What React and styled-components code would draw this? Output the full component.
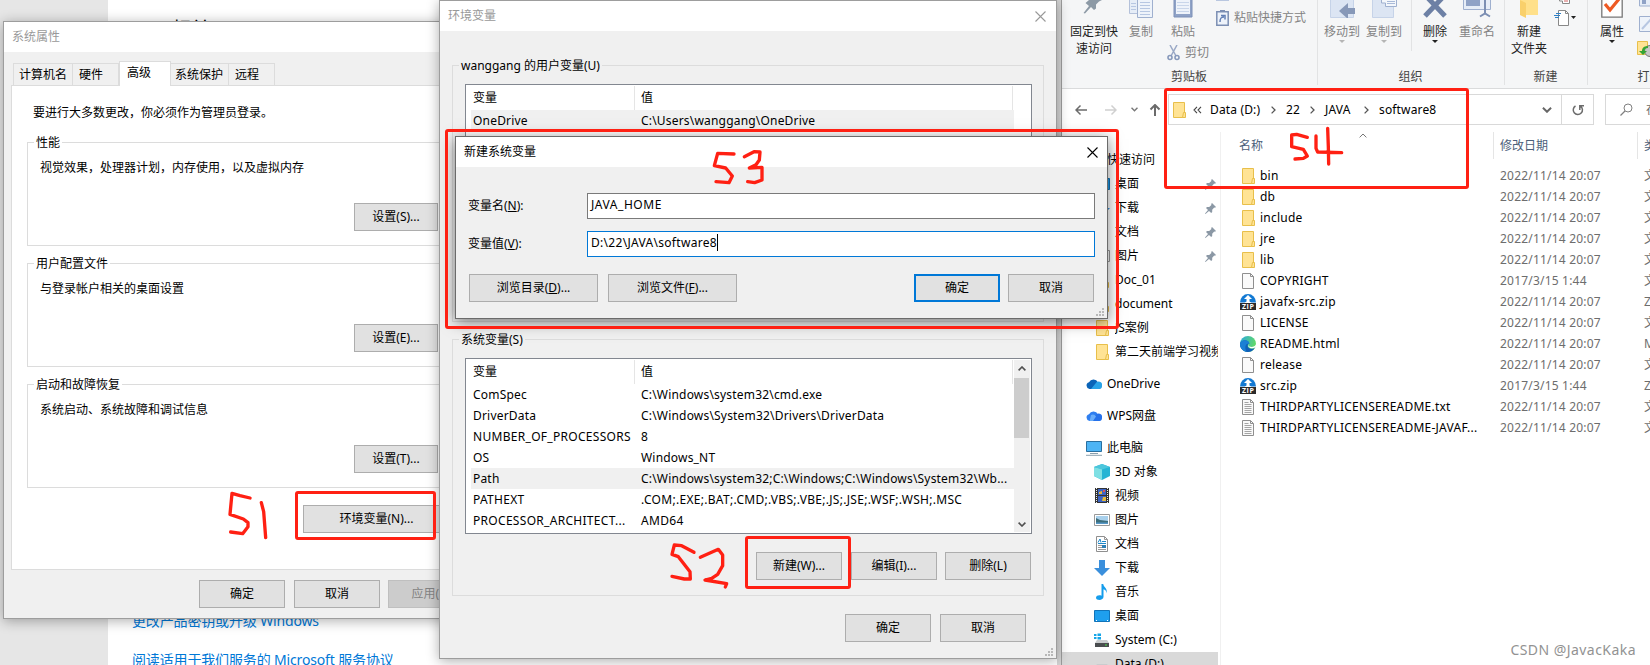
import React from "react";
import styled, { createGlobalStyle, css } from "styled-components";

const GlobalStyle = createGlobalStyle`
  * {
    box-sizing: border-box;
  }
  body {
    margin: 0;
    overflow: hidden;
    background: #fff;
    color: #000;
    font: 12px/16px "Noto Sans", "Noto Sans CJK SC", sans-serif;
  }
  svg {
    display: block;
    flex: none;
  }
`;

const Desktop = styled.div`
  position: relative;
  width: 1650px;
  height: 665px;
  overflow: hidden;
  background: #fff;
  white-space: nowrap;
`;

/* ---------- settings page in the background ---------- */

const Settings = styled.div`
  display: flex;
  width: 1061px;
  height: 665px;
`;

const SettingsNav = styled.div`
  width: 108px;
  background: #e6e6e6;
`;

const SettingsBody = styled.div`
  flex: 1;
  display: flex;
  flex-direction: column;
  justify-content: space-between;
  padding: 13px 0 0 24px;
`;

const SettingsTitle = styled.div`
  padding-left: 40px;
  font-size: 19px;
  line-height: 32px;
`;

const SettingsLinks = styled.div`
  display: flex;
  flex-direction: column;
  gap: 19px;
  height: 54px;
  color: #0078d7;
  font-size: 14px;
  line-height: 20px;
  letter-spacing: -0.15px;
`;

const Backdrop = styled.div`
  position: absolute;
  left: 1057px;
  top: 0;
  width: 4px;
  height: 665px;
  background: #d5d5d5;
`;

/* ---------- shared window parts ---------- */

const Window = styled.div`
  position: absolute;
  display: flex;
  flex-direction: column;
  left: ${(p) => p.$x}px;
  top: ${(p) => p.$y}px;
  width: ${(p) => p.$w}px;
  height: ${(p) => p.$h}px;
  background: #f0f0f0;
  border: 1px solid ${(p) => (p.$active ? "#6b6b6b" : "#9d9d9d")};
  box-shadow: ${(p) =>
    p.$active ? "0 3px 14px rgba(0, 0, 0, 0.5)" : "0 2px 12px rgba(0, 0, 0, 0.32)"};
`;

const TitleBar = styled.div`
  display: flex;
  align-items: center;
  justify-content: space-between;
  flex: none;
  height: 30px;
  padding: 0 ${(p) => (p.$active ? 9 : 10)}px 0 8px;
  background: #fff;
  color: ${(p) => (p.$active ? "#000" : "#999")};
`;

const Button = styled.div`
  display: flex;
  flex: none;
  align-items: center;
  justify-content: center;
  width: ${(p) => p.$w || 86}px;
  height: 28px;
  margin-left: ${(p) => p.$ml || 0}px;
  background: #e1e1e1;
  border: 1px solid #adadad;
  ${(p) =>
    p.$primary &&
    css`
      border: 2px solid #0078d7;
    `}
  ${(p) =>
    p.$disabled &&
    css`
      background: #ccc;
      border-color: #bfbfbf;
      color: #838383;
    `}
`;

const ButtonRow = styled.div`
  display: flex;
  gap: ${(p) => p.$gap || 9}px;
  justify-content: ${(p) => p.$align || "flex-end"};
`;

const Group = styled.fieldset`
  margin: 0;
  min-width: 0;
  padding: 0;
  border: 1px solid #dcdcdc;
  height: ${(p) => p.$h}px;
`;

const Legend = styled.legend`
  height: 16px;
  margin-left: 6px;
  padding: 0 2px;
  line-height: 18px;
`;

/* ---------- system properties ---------- */

const Tabs = styled.div`
  display: flex;
  align-items: flex-end;
  height: 33px;
  padding-left: 9px;
`;

const Tab = styled.div`
  position: relative;
  width: ${(p) => p.$w}px;
  height: ${(p) => (p.$active ? 25 : 22)}px;
  margin-bottom: ${(p) => (p.$active ? -1 : 0)}px;
  padding: 3px 0 0 ${(p) => p.$pl}px;
  border: 1px solid #dcdcdc;
  border-bottom: 0;
  border-left-width: ${(p) => (p.$joined ? 0 : 1)}px;
  background: ${(p) => (p.$active ? "#fff" : "#f0f0f0")};
`;

const TabPage = styled.div`
  height: 485px;
  margin-left: 7px;
  padding: 19px 0 0 15px;
  background: #fff;
  border: 1px solid #dcdcdc;
`;

const Intro = styled.div`
  height: 29px;
  padding-left: 6px;
`;

const PropGroup = styled(Group)`
  width: 440px;
  margin-bottom: 9px;
`;

const PropText = styled.div`
  padding: 10px 0 0 12px;
`;

const PropAction = styled.div`
  padding: 27px 0 0 326px;
`;

const EnvAction = styled.div`
  padding: 8px 0 0 276px;
`;

function PropertyGroup({ title, text, action }) {
  return (
    <PropGroup $h={112}>
      <Legend>{title}</Legend>
      <PropText>{text}</PropText>
      <PropAction>
        <Button $w={84}>{action}</Button>
      </PropAction>
    </PropGroup>
  );
}

const PropFooter = styled(ButtonRow)`
  padding: 10px 0 0 195px;
`;

function SystemProperties() {
  return (
    <Window $x={3} $y={21} $w={480} $h={598}>
      <TitleBar>系统属性</TitleBar>
      <Tabs>
        <Tab $w={60} $pl={5}>计算机名</Tab>
        <Tab $w={46} $pl={6} $joined>硬件</Tab>
        <Tab $w={52} $pl={7} $active>高级</Tab>
        <Tab $w={58} $pl={4} $joined>系统保护</Tab>
        <Tab $w={46} $pl={6} $joined>远程</Tab>
      </Tabs>
      <TabPage>
        <Intro>要进行大多数更改，你必须作为管理员登录。</Intro>
        <PropertyGroup title="性能" text="视觉效果，处理器计划，内存使用，以及虚拟内存" action="设置(S)..." />
        <PropertyGroup title="用户配置文件" text="与登录帐户相关的桌面设置" action="设置(E)..." />
        <PropertyGroup title="启动和故障恢复" text="系统启动、系统故障和调试信息" action="设置(T)..." />
        <EnvAction>
          <Button $w={147}>环境变量(N)...</Button>
        </EnvAction>
      </TabPage>
      <PropFooter $align="flex-start">
        <Button>确定</Button>
        <Button>取消</Button>
        <Button $ml={-1} $disabled>应用(A)</Button>
      </PropFooter>
    </Window>
  );
}

/* ---------- environment variables ---------- */

const EnvBody = styled.div`
  display: flex;
  flex-direction: column;
  padding: 26px 12px 0 12px;
`;

const EnvGroup = styled(Group)`
  margin-bottom: ${(p) => p.$gap || 0}px;
`;

const ListBox = styled.div`
  display: flex;
  width: 567px;
  height: ${(p) => p.$h}px;
  margin: 11px 0 18px 12px;
  background: #fff;
  border: 1px solid #828790;
`;

const ListRows = styled.div`
  width: 548px;
  padding-left: 5px;
  overflow: hidden;
`;

const ListHead = styled.div`
  display: grid;
  grid-template-columns: 164px 378px;
  height: 25px;
  padding-top: 1px;
  div {
    padding: 4px 0 0 2px;
    border-right: 1px solid #e5e5e5;
  }
  div + div {
    padding-left: 6px;
  }
`;

const ListRow = styled.div`
  display: grid;
  grid-template-columns: 168px 374px;
  align-items: center;
  height: 21px;
  padding-left: 2px;
  background: ${(p) => (p.$selected ? "#f0f0f0" : "#fff")};
`;

const Cell = styled.div`
  letter-spacing: ${(p) => (p.$wide ? 0.3 : 0.19)}px;
`;

const ScrollBar = styled.div`
  display: flex;
  flex-direction: column;
  justify-content: space-between;
  align-items: center;
  width: 16px;
  margin: 1px 0;
  padding: 6px 0 5px;
  background: #f0f0f0;
`;

const ScrollThumb = styled.div`
  width: 15px;
  height: 60px;
  margin: -1px 1px 77px 0;
  background: #cdcdcd;
`;

const Chevron = ({ d, w = 8, h = 5, stroke = "#505050", sw = 1.6 }) => (
  <svg width={w} height={h} viewBox="0 0 8 5">
    <path d={d} fill="none" stroke={stroke} strokeWidth={sw} />
  </svg>
);
const UP = "M.6 4.4 4 1l3.4 3.4";
const DOWN = "M.6.6 4 4 7.4.6";

const CloseIcon = ({ color }) => (
  <svg width="11" height="11" viewBox="0 0 11 11">
    <path d="M.5.5l10 10M10.5.5l-10 10" stroke={color} strokeWidth="1.1" />
  </svg>
);

const GripHolder = styled.div`
  position: absolute;
  right: 3px;
  bottom: 2px;
`;

const Grip = () => (
  <GripHolder>
    <svg width="8" height="8" fill="#b8b8b8">
      <path d="M6 0h2v2H6zM3 3h2v2H3zM6 3h2v2H6zM0 6h2v2H0zM3 6h2v2H3zM6 6h2v2H6z" />
    </svg>
  </GripHolder>
);

const EnvButtons = styled(ButtonRow)`
  padding-right: 12px;
`;

const EnvFooter = styled(ButtonRow)`
  padding: 18px 30px 0 0;
`;

const variables = [
  { name: "ComSpec", value: "C:\\Windows\\system32\\cmd.exe" },
  { name: "DriverData", value: "C:\\Windows\\System32\\Drivers\\DriverData" },
  { name: "NUMBER_OF_PROCESSORS", value: "8", wide: true },
  { name: "OS", value: "Windows_NT" },
  { name: "Path", value: "C:\\Windows\\system32;C:\\Windows;C:\\Windows\\System32\\Wb...", selected: true },
  { name: "PATHEXT", value: ".COM;.EXE;.BAT;.CMD;.VBS;.VBE;.JS;.JSE;.WSF;.WSH;.MSC", wide: true },
  { name: "PROCESSOR_ARCHITECT...", value: "AMD64", wide: true },
];

function EnvironmentVariables() {
  return (
    <Window $x={439} $y={0} $w={618} $h={659}>
      <TitleBar>
        环境变量
        <CloseIcon color="#999" />
      </TitleBar>
      <EnvBody>
        <EnvGroup $h={265} $gap={9}>
          <Legend>wanggang 的用户变量(U)</Legend>
          <ListBox $h={175}>
            <ListRows>
              <ListHead>
                <div>变量</div>
                <div>值</div>
              </ListHead>
              <ListRow $selected>
                <Cell>OneDrive</Cell>
                <Cell>C:\Users\wanggang\OneDrive</Cell>
              </ListRow>
            </ListRows>
          </ListBox>
        </EnvGroup>
        <EnvGroup $h={265}>
          <Legend>系统变量(S)</Legend>
          <ListBox $h={176}>
            <ListRows>
              <ListHead>
                <div>变量</div>
                <div>值</div>
              </ListHead>
              {variables.map((v) => (
                <ListRow key={v.name} $selected={v.selected}>
                  <Cell $wide={v.wide}>{v.name}</Cell>
                  <Cell $wide={v.wide}>{v.value}</Cell>
                </ListRow>
              ))}
            </ListRows>
            <ScrollBar>
              <Chevron d={UP} />
              <ScrollThumb />
              <Chevron d={DOWN} />
            </ScrollBar>
          </ListBox>
          <EnvButtons>
            <Button>新建(W)...</Button>
            <Button>编辑(I)...</Button>
            <Button $ml={-1}>删除(L)</Button>
          </EnvButtons>
        </EnvGroup>
      </EnvBody>
      <EnvFooter>
        <Button>确定</Button>
        <Button>取消</Button>
      </EnvFooter>
      <Grip />
    </Window>
  );
}

/* ---------- new system variable ---------- */

const Form = styled.div`
  display: flex;
  flex-direction: column;
  gap: 12px;
  padding: 26px 12px 17px 12px;
`;

const Field = styled.label`
  display: grid;
  grid-template-columns: 119px 508px;
  align-items: center;
`;

const TextBox = styled.div`
  display: flex;
  align-items: center;
  height: 26px;
  padding: 0 0 3px 3px;
  background: #fff;
  border: 1px solid ${(p) => (p.$focus ? "#0078d7" : "#7a7a7a")};
  letter-spacing: ${(p) => (p.$focus ? 0.3 : 0.55)}px;
`;

const Caret = styled.span`
  width: 1px;
  height: 17px;
  background: #000;
`;

const DialogActions = styled.div`
  display: flex;
  justify-content: space-between;
  padding: 0 13px 0 13px;
`;

function NewVariable() {
  return (
    <Window $x={455} $y={136} $w={653} $h={183} $active>
      <TitleBar $active>
        新建系统变量
        <CloseIcon color="#000" />
      </TitleBar>
      <Form>
        <Field>
          <span>变量名(<u>N</u>):</span>
          <TextBox>JAVA_HOME</TextBox>
        </Field>
        <Field>
          <span>变量值(<u>V</u>):</span>
          <TextBox $focus>
            D:\22\JAVA\software8
            <Caret />
          </TextBox>
        </Field>
      </Form>
      <DialogActions>
        <ButtonRow $gap={10}>
          <Button $w={129}><span>浏览目录(<u>D</u>)...</span></Button>
          <Button $w={129}><span>浏览文件(<u>F</u>)...</span></Button>
        </ButtonRow>
        <ButtonRow $gap={8}>
          <Button $primary>确定</Button>
          <Button>取消</Button>
        </ButtonRow>
      </DialogActions>
      <Grip />
    </Window>
  );
}

/* ---------- icons ---------- */

const Folder = () => (
  <svg width="16" height="16" viewBox="0 0 16 16">
    <path d="M2.5.5h11v15h-11z" fill="#ffe394" stroke="#e8bf4a" />
    <path d="M12.5 10.5h2v5h-3z" fill="#ffe394" stroke="#e8bf4a" />
  </svg>
);

const Doc = ({ lines }) => (
  <svg width="16" height="16" viewBox="0 0 16 16">
    <path d="M2.5.5h8l3 3v12h-11z" fill="#fafafa" stroke="#8f8f8f" />
    <path d="M10.5.5v3h3" fill="none" stroke="#8f8f8f" />
    {lines && <path d="M4.5 3.5h4M4.5 5.5h7M4.5 7.5h7M4.5 9.5h7M4.5 11.5h7M4.5 13.5h7" stroke="#a5a5a5" />}
  </svg>
);

const ZipText = styled.text`
  font: bold 7px "Open Sans", sans-serif;
  fill: #fff;
`;

const Zip = () => (
  <svg width="16" height="16" viewBox="0 0 16 16">
    <path d="M0 8.500a8 8.500 0 0 1 16 0z" fill="#1279d3" />
    <path d="M8 1l4 4H9.500v2.500l2 1.500H4.500l2-1.500V5H4z" fill="#fff" />
    <path d="M0 9h16v7H0z" fill="#2b2b2b" />
    <ZipText x="2" y="15" textLength="12">ZIP</ZipText>
  </svg>
);

const Edge = () => (
  <svg width="16" height="16" viewBox="0 0 16 16">
    <defs>
      <linearGradient id="edgeTop" x1="0" y1="0" x2="1" y2="0.3">
        <stop offset="0" stopColor="#2aa8e0" />
        <stop offset="1" stopColor="#5fd86a" />
      </linearGradient>
    </defs>
    <circle cx="8" cy="8" r="8" fill="url(#edgeTop)" />
    <path d="M0 8C1 3.500 8 3 9.500 7.500 7 8 7 11.500 10 12.500c2 .6 3.500 0 5-1C13 15.500 9 16.500 6 15.700 2 14.700 0 11.500 0 8z" fill="#0f5fb8" />
    <path d="M0 8c1-4.500 8-5 9.500-.5C6 7 4 10.500 6.500 15.800 2 14.700 0 11.500 0 8z" fill="#1b80d4" />
    <path d="M9.300 7.300c-1.600 1-1.300 3 1 3.500 2.200.4 5-.3 5.700-2.600l.1 2c-.5 1.500-3.500 2.600-6 1.700-2.500-.9-2.600-3.600-.8-4.600z" fill="#fff" />
  </svg>
);

const Pin = ({ size = 11 }) => (
  <svg width={size} height={size} viewBox="0 0 11 11">
    <path d="M7 0l4 4-1 .8-.8-.2-2 2.200v2.200l-1 1L4 8 .5 11 0 10.500 3 7 1 5l1-1h2.200l2.200-2L6.200.9z" fill="#8b98a5" />
  </svg>
);

const Cloud = ({ wps }) => (
  <svg width="16" height="16" viewBox="0 0 16 16">
    <path d="M3.500 13A3.500 3.500 0 0 1 3 6.200 5 5 0 0 1 12 6.500a3.300 3.300 0 0 1 1 6.500z" fill={wps ? "#2f7ff0" : "#0a64b8"} />
    <path d="M5 13l4.500-5.500A3.500 3.500 0 0 1 16 10a3 3 0 0 1-3 3z" fill={wps ? "#2671ea" : "#28a3e8"} />
    {wps && <path d="M5 7a4 4 0 0 1 5 1.500L7 13H3.600z" fill="#6aaefa" />}
  </svg>
);

const Monitor = () => (
  <svg width="16" height="16" viewBox="0 0 16 16">
    <path d="M.5 1.500h15v10H.5z" fill="#4db4f5" stroke="#2a6f9f" />
    <path d="M4 13.500h8M0 15.300h16" stroke="#8ba0ae" />
  </svg>
);

const Cube = () => (
  <svg width="16" height="16" viewBox="0 0 16 16">
    <path d="M8 0l8 3v9l-8 4-8-4V3z" fill="#25b4d4" />
    <path d="M8 5v11l-8-4V3z" fill="#7fe0e4" />
    <path d="M8 0l8 3-8 2.500L0 3z" fill="#4cc6dc" />
  </svg>
);

const Film = () => (
  <svg width="16" height="16" viewBox="0 0 16 16">
    <path d="M1 0h14v15H1z" fill="#333" />
    <path d="M4 1h8v6H4zM4 8h8v6H4z" fill="#3b63c4" />
    <path d="M2.500 0v15M13.500 0v15" stroke="#eee" strokeDasharray="1 1" />
    <path d="M5 4l3-1v3H5zM9 9h3v4H8z" fill="#e3b93c" />
    <path d="M9 2h2v2H9z" fill="#d65353" />
  </svg>
);

const Picture = () => (
  <svg width="16" height="16" viewBox="0 0 16 16">
    <path d="M.5 2.500h15v11H.5z" fill="#fff" stroke="#999" />
    <path d="M2 4h12v8H2z" fill="#a8d0ec" />
    <path d="M2 6l4 2 8 1v3H2z" fill="#3c6e7c" />
    <path d="M2 10.500h12V12H2z" fill="#5798c8" />
  </svg>
);

const TextDoc = () => (
  <svg width="16" height="16" viewBox="0 0 16 16">
    <path d="M2.500.5h8l3 3v12h-11z" fill="#fff" stroke="#8f8f8f" />
    <path d="M10.500.5v3h3M4 13.500h8M4 11.500h4M4 9.500h4" fill="none" stroke="#999" />
    <path d="M4 6.500l2-3.500 1 3.500M8 5.500h4M4 7.500h8" fill="none" stroke="#1d87c9" />
    <path d="M8 9h4v3H8z" fill="#2d7fb5" />
  </svg>
);

const Download = () => (
  <svg width="16" height="16" viewBox="0 0 16 16">
    <path d="M5 0h6v8h5l-8 8-8-8h5z" fill="#3a8fdc" />
  </svg>
);

const Music = () => (
  <svg width="16" height="16" viewBox="0 0 16 16">
    <path d="M7.500 0h1.700c.6 3.500 5 4.500 3 9.500.3-3-1-3.800-2.700-4.300v7.600c0 4-7.500 4-7.500.9 0-2.400 3.500-3 5.500-2z" fill="#159dec" />
  </svg>
);

const DesktopIcon = () => (
  <svg width="16" height="16" viewBox="0 0 16 16">
    <path d="M.5 2.500h15v11H.5z" fill="#1e9fee" stroke="#1173b8" />
    <path d="M2 12.500h9M13 12.500h1" stroke="#fff" strokeDasharray="1 8" />
  </svg>
);

const Drive = ({ win }) => (
  <svg width="16" height="16" viewBox="0 0 16 16">
    <path d="M3 8h10l2 3H1z" fill="#c9ccce" />
    <path d="M1 11h14v4H1z" fill="#4a4d4f" />
    <path d="M11 12.500h2v1h-2z" fill="#4be04b" />
    {win && <path d="M0 2h2.500v2H0zM3.500 1.500H7V4H3.500zM0 5h2.500v2H0zM3.500 5H7v2.500H3.500z" fill="#14a5e8" />}
  </svg>
);

/* ---------- explorer ribbon ---------- */

const Explorer = styled.div`
  position: absolute;
  left: 1061px;
  top: 0;
  width: 589px;
  height: 665px;
  background: #fff;
  border-left: 1px solid #9d9d9d;
  overflow: hidden;
`;

const Ribbon = styled.div`
  display: flex;
  height: 89px;
  background: #f5f6f7;
  border-bottom: 1px solid #dadbdc;
`;

const RibbonGroup = styled.div`
  display: flex;
  flex: none;
  flex-direction: column;
  justify-content: space-between;
  width: ${(p) => p.$w}px;
  height: 85px;
  border-right: 1px solid #e2e3e4;
`;

const RibbonTools = styled.div`
  display: flex;
`;

const RibbonLabel = styled.div`
  padding-right: 1px;
  text-align: center;
  color: #444;
`;

const Tool = styled.div`
  display: flex;
  flex: none;
  flex-direction: column;
  align-items: center;
  width: ${(p) => p.$w}px;
  margin-left: ${(p) => p.$ml || 0}px;
  color: ${(p) => (p.$off ? "#838383" : "#222")};
  line-height: 17px;
  text-align: center;
  svg:first-child {
    margin-bottom: 5px;
  }
`;

const ToolColumn = styled.div`
  display: flex;
  flex-direction: column;
  gap: 8px;
  margin-left: ${(p) => p.$ml || 0}px;
`;

const SmallTool = styled.div`
  display: flex;
  align-items: center;
  gap: 5px;
  height: 16px;
  color: #838383;
`;

const CutRow = styled(SmallTool)`
  margin: -3px 0 0 0;
  gap: 5px;
`;

const PasteColumn = styled.div`
  display: flex;
  flex-direction: column;
  gap: 9px;
  margin: -15px 0 0 7px;
`;

const Divider = styled.div`
  width: 1px;
  height: 51px;
  margin-left: 8px;
  background: #e2e3e4;
`;

const Drop = ({ color = "#222" }) => (
  <svg width="6" height="3" viewBox="0 0 6 3">
    <path d="M0 0h6L3 3z" fill={color} />
  </svg>
);

const BigPin = () => (
  <svg width="24" height="18" viewBox="0 0 24 18">
    <path d="M7 0h13l-3 1.500-3 3v4l-2 1.500-3-3-6 6.500-1.500-.5L7 6 3.500 3z" fill="#8d9aa6" />
  </svg>
);

const CopyBig = () => (
  <svg width="26" height="18" viewBox="0 0 26 18">
    <path d="M1.500-1v14.500h10V-1" fill="#e6edf7" stroke="#b4c1da" />
    <path d="M9.500-1v18.500h15V-1" fill="#eef3fa" stroke="#9fb0cf" />
    <path d="M3 3.500h5M3 6.500h5M3 9.500h5M12 2.500h10M12 5.500h10M12 8.500h10M12 11.500h10M12 14.500h10" stroke="#b7c7e2" />
  </svg>
);

const PasteBig = () => (
  <svg width="20" height="18" viewBox="0 0 20 18">
    <path d="M1-1v18h18V-1" fill="#8fa2c6" stroke="#7c90b8" />
    <path d="M3 0h14v14H3z" fill="#eef3fa" />
    <path d="M4 2.500h12M4 5.500h12M4 8.500h12M4 11.500h12" stroke="#c9d6ea" />
  </svg>
);

const MoveTo = () => (
  <svg width="26" height="18" viewBox="0 0 26 18">
    <path d="M1.500-1v18.500h23V-1" fill="#dce5f3" stroke="#c6d3e8" />
    <path d="M10 11l9-8v5h7v6h-7v5z" fill="#8798b8" />
  </svg>
);

const CopyTo = () => (
  <svg width="26" height="18" viewBox="0 0 26 18">
    <path d="M1.500-1v18.500h21V-1" fill="#dce5f3" stroke="#c6d3e8" />
    <path d="M10.500-1v4h4v3.500h11v-8" fill="#f4f7fb" stroke="#9fb0cf" />
    <path d="M16 1.500h8M16 3.500h8" stroke="#a9bad8" />
  </svg>
);

const DeleteBig = () => (
  <svg width="26" height="18" viewBox="0 0 26 18">
    <path d="M4-4l19 20M22-4L3 16" stroke="#6d80a5" strokeWidth="5" />
  </svg>
);

const RenameBig = () => (
  <svg width="28" height="18" viewBox="0 0 28 18">
    <path d="M.5-1v10.500h27V-1" fill="#e6edf7" stroke="#9fb0cf" />
    <path d="M3 0h14v6H3z" fill="#8fa2c6" />
    <path d="M22 0v14M17 16.500l5-3 5 3" fill="none" stroke="#7c8fb3" strokeWidth="2" />
  </svg>
);

const FolderBig = () => (
  <svg width="22" height="18" viewBox="0 0 22 18">
    <path d="M2 0h18v15H8z" fill="#ffe08a" />
    <path d="M2 0l6 3v15l-6-3z" fill="#f9d06b" />
  </svg>
);

const CheckBig = () => (
  <svg width="22" height="18" viewBox="0 0 22 18">
    <path d="M.8-1v18.200h20.400V-1" fill="#fff" stroke="#777" strokeWidth="1.3" />
    <path d="M4 4l5 6 9-11" fill="none" stroke="#ee5a24" strokeWidth="3.2" />
  </svg>
);

const Shortcut = () => (
  <svg width="13" height="16" viewBox="0 0 13 16">
    <path d="M.8 1.800h11.400v13.400H.8z" fill="#eef3fa" stroke="#7c8fb3" strokeWidth="1.5" />
    <path d="M4 0h5v2H4z" fill="#7c8fb3" />
    <path d="M4 12c0-4 1-5 4-5M5 5.500h4v4" fill="none" stroke="#6380b5" strokeWidth="1.5" />
  </svg>
);

const Scissors = () => (
  <svg width="13" height="16" viewBox="0 0 13 16">
    <path d="M3 0l6 11M10 0L4 11" stroke="#9aa9c6" strokeWidth="1.5" />
    <circle cx="3" cy="12.5" r="2" fill="none" stroke="#8799bb" strokeWidth="1.6" />
    <circle cx="10" cy="12.5" r="2" fill="none" stroke="#8799bb" strokeWidth="1.6" />
  </svg>
);

const CopyPathIcon = () => (
  <svg width="13" height="16" viewBox="0 0 13 16">
    <path d="M0 2h13v14H0z" fill="#b9c7e0" />
  </svg>
);

const NewItem = () => (
  <svg width="22" height="27" viewBox="0 0 22 27">
    <path d="M5.500-1v2h3v2.500h7V-1" fill="#fff" stroke="#888" />
    <path d="M10 1h4" stroke="#d06060" />
    <path d="M4.500 10.500h7l3 3v12h-10z" fill="#fff" stroke="#888" />
    <path d="M11.500 10.500v3h3" fill="none" stroke="#888" />
    <path d="M2 13.500h5M0 15.500h6M1 17.500h4" stroke="#2f7fc4" />
    <path d="M17 16h5l-2.500 3z" fill="#222" />
  </svg>
);

const OpenIcons = () => (
  <svg width="20" height="57" viewBox="0 0 20 57">
    <path d="M2.500-1v7h14v-7" fill="#e6edf7" stroke="#9fb0cf" />
    <path d="M5 0h4v4H5z" fill="#8fa2c6" />
    <path d="M2.500 16.500h14v15h-14z" fill="#eef3fa" stroke="#9fb0cf" />
    <path d="M5 29l10-11" stroke="#b7c7e2" strokeWidth="2" />
    <path d="M.5 41.500h10v13H.5z" fill="#ffe394" stroke="#e8bf4a" />
    <circle cx="13" cy="51" r="5.5" fill="#c7c7c7" stroke="#777" />
    <path d="M11 46c-5 0-6 3-6 5H2l4 4 4-4H7.500c0-2 1-3 3.500-3z" fill="#34a533" />
  </svg>
);

function ExplorerRibbon() {
  return (
    <Ribbon>
      <RibbonGroup $w={256}>
        <RibbonTools>
          <Tool $w={52} $ml={6}>
            <BigPin />
            固定到快<br />速访问
          </Tool>
          <Tool $w={36} $ml={3} $off>
            <CopyBig />
            复制
          </Tool>
          <ToolColumn $ml={8}>
            <Tool $w={32} $off>
              <PasteBig />
              粘贴
            </Tool>
            <CutRow>
              <Scissors />
              剪切
            </CutRow>
          </ToolColumn>
          <PasteColumn>
            <SmallTool>
              <CopyPathIcon />
              复制路径
            </SmallTool>
            <SmallTool>
              <Shortcut />
              粘贴快捷方式
            </SmallTool>
          </PasteColumn>
        </RibbonTools>
        <RibbonLabel>剪贴板</RibbonLabel>
      </RibbonGroup>
      <RibbonGroup $w={187}>
        <RibbonTools>
          <Tool $w={38} $ml={5} $off>
            <MoveTo />
            移动到
            <Drop color="#b5b5b5" />
          </Tool>
          <Tool $w={38} $ml={4} $off>
            <CopyTo />
            复制到
            <Drop color="#b5b5b5" />
          </Tool>
          <Divider />
          <Tool $w={30} $ml={8}>
            <DeleteBig />
            删除
            <Drop />
          </Tool>
          <Tool $w={38} $ml={8} $off>
            <RenameBig />
            重命名
          </Tool>
        </RibbonTools>
        <RibbonLabel>组织</RibbonLabel>
      </RibbonGroup>
      <RibbonGroup $w={83}>
        <RibbonTools>
          <Tool $w={38} $ml={5}>
            <FolderBig />
            新建<br />文件夹
          </Tool>
          <ToolColumn $ml={6}>
            <NewItem />
          </ToolColumn>
        </RibbonTools>
        <RibbonLabel>新建</RibbonLabel>
      </RibbonGroup>
      <RibbonGroup $w={125}>
        <RibbonTools>
          <Tool $w={28} $ml={10}>
            <CheckBig />
            属性
            <Drop />
          </Tool>
          <ToolColumn $ml={11}>
            <OpenIcons />
          </ToolColumn>
        </RibbonTools>
        <RibbonLabel>打开</RibbonLabel>
      </RibbonGroup>
    </Ribbon>
  );
}

/* ---------- explorer address bar ---------- */

const AddressRow = styled.div`
  display: flex;
  align-items: center;
  height: 31px;
  margin: 5px 0 7px;
`;

const NavArrows = styled.div`
  display: flex;
  flex: none;
  align-items: center;
  width: 106px;
  padding-left: 13px;
`;

const Arrow = ({ color, up }) => (
  <svg width="12" height="12" viewBox="0 0 12 12">
    <path
      d={up ? "M6 12V1M1.500 5.500L6 1l4.500 4.500" : "M12 6H1M5.500 1.500L1 6l4.500 4.500"}
      fill="none"
      stroke={color}
      strokeWidth={up ? 2 : 1.5}
    />
  </svg>
);

const Flip = styled.span`
  transform: scaleX(-1);
  margin: 0 14px 0 18px;
`;

const UpArrow = styled.span`
  margin-left: 11px;
`;

const AddressBox = styled.div`
  display: flex;
  flex: none;
  align-items: center;
  width: 426px;
  height: 31px;
  border: 1px solid #d9d9d9;
`;

const Crumb = styled.span`
  width: ${(p) => p.$w}px;
  letter-spacing: 0.15px;
`;

const Sep = styled.span`
  display: flex;
  width: 25px;
  padding-left: 10px;
`;

const FolderSlot = styled.span`
  margin: 0 6px 0 2px;
`;

const Dropdown = styled.span`
  margin-left: auto;
  padding-right: 9px;
`;

const Refresh = styled.div`
  display: flex;
  align-items: center;
  justify-content: center;
  width: 32px;
  height: 29px;
  border-left: 1px solid #d9d9d9;
`;

const SearchBox = styled.div`
  display: flex;
  flex: none;
  align-items: center;
  gap: 13px;
  width: 200px;
  height: 31px;
  margin-left: 11px;
  padding-left: 14px;
  border: 1px solid #d9d9d9;
  color: #6d6d6d;
`;

const Right = () => (
  <svg width="5" height="8" viewBox="0 0 5 8">
    <path d="M.6.6L4 4 .6 7.400" fill="none" stroke="#555" strokeWidth="1.3" />
  </svg>
);

function AddressBar() {
  return (
    <AddressRow>
      <NavArrows>
        <Arrow color="#6b6b6b" />
        <Flip><Arrow color="#d0d0d0" /></Flip>
        <Chevron d={DOWN} w={7} stroke="#777" />
        <UpArrow><Arrow color="#6b6b6b" up /></UpArrow>
      </NavArrows>
      <AddressBox>
        <FolderSlot><Folder /></FolderSlot>
        <svg width="9" height="8" viewBox="0 0 9 8">
          <path d="M4 .8L1 4l3 3.200M8 .8L5 4l3 3.200" fill="none" stroke="#444" strokeWidth="1.1" />
        </svg>
        <Crumb $w={8} />
        <Crumb $w={51}>Data (D:)</Crumb>
        <Sep><Right /></Sep>
        <Crumb $w={14}>22</Crumb>
        <Sep><Right /></Sep>
        <Crumb $w={29}>JAVA</Crumb>
        <Sep><Right /></Sep>
        <Crumb $w={57}>software8</Crumb>
        <Dropdown><Chevron d={DOWN} w={10} h={6} stroke="#666" /></Dropdown>
        <Refresh>
          <svg width="12" height="12" viewBox="0 0 12 12">
            <path d="M3.500 2A4.600 4.600 0 1 0 8.500 2.200M7.800 6V1.800H12" fill="none" stroke="#6b6b6b" strokeWidth="1.5" />
          </svg>
        </Refresh>
      </AddressBox>
      <SearchBox>
        <svg width="13" height="13" viewBox="0 0 13 13">
          <circle cx="8" cy="5" r="4" fill="none" stroke="#808080" />
          <path d="M5 8L.5 12.500" stroke="#808080" strokeWidth="1.2" />
        </svg>
        在 software8 中搜索
      </SearchBox>
    </AddressRow>
  );
}

/* ---------- explorer panes ---------- */

const Panes = styled.div`
  display: flex;
  height: 533px;
`;

const Tree = styled.div`
  flex: none;
  width: 159px;
  padding-top: 16px;
  border-right: 1px solid #f0f0f0;
`;

const TreeRow = styled.div`
  display: flex;
  align-items: center;
  width: 156px;
  height: 24px;
  margin-top: ${(p) => (p.$gap ? 8 : 0)}px;
  padding-left: ${(p) => (p.$level ? 32 : 24)}px;
  background: ${(p) => (p.$selected ? "#d9d9d9" : "transparent")};
  overflow: hidden;
`;

const TreeText = styled.span`
  flex: 1;
  margin-left: 5px;
  overflow: hidden;
`;

const PinSlot = styled.span`
  margin-right: 2px;
`;

const Files = styled.div`
  flex: none;
  width: 440px;
`;

const FileHead = styled.div`
  display: grid;
  grid-template-columns: 273px 144px 20px;
  height: 26px;
  color: #4c607a;
  line-height: 27px;
  div {
    padding-left: 6px;
    border-right: 1px solid #e5e5e5;
  }
  div:first-child {
    display: flex;
    gap: 92px;
    padding: 0 0 0 18px;
  }
  svg {
    margin: 1px 0 0 4px;
  }
`;

const FileList = styled.div`
  padding-top: 7px;
`;

const FileRow = styled.div`
  display: grid;
  grid-template-columns: 16px 244px 144px 20px;
  align-items: center;
  height: 21px;
  padding-left: 19px;
  color: #6d6d6d;
  letter-spacing: 0.2px;
`;

const FileName = styled.span`
  padding-left: 4px;
  color: #000;
  letter-spacing: 0.23px;
`;

const tree = [
  { text: "快速访问" },
  { text: "桌面", level: 1, icon: DesktopIcon, pin: true },
  { text: "下载", level: 1, icon: Download, pin: true },
  { text: "文档", level: 1, icon: TextDoc, pin: true },
  { text: "图片", level: 1, icon: Picture, pin: true },
  { text: "Doc_01", level: 1, icon: Folder },
  { text: "document", level: 1, icon: Folder },
  { text: "JS案例", level: 1, icon: Folder },
  { text: "第二天前端学习视频", level: 1, icon: Folder },
  { text: "OneDrive", icon: Cloud, gap: true },
  { text: "WPS网盘", icon: () => <Cloud wps />, gap: true },
  { text: "此电脑", icon: Monitor, gap: true },
  { text: "3D 对象", level: 1, icon: Cube },
  { text: "视频", level: 1, icon: Film },
  { text: "图片", level: 1, icon: Picture },
  { text: "文档", level: 1, icon: TextDoc },
  { text: "下载", level: 1, icon: Download },
  { text: "音乐", level: 1, icon: Music },
  { text: "桌面", level: 1, icon: DesktopIcon },
  { text: "System (C:)", level: 1, icon: () => <Drive win /> },
  { text: "Data (D:)", level: 1, icon: Drive, selected: true },
];

const TxtDoc = () => <Doc lines />;
const NEW = "2022/11/14 20:07";
const OLD = "2017/3/15 1:44";

const files = [
  { name: "bin", icon: Folder, date: NEW, type: "文件夹" },
  { name: "db", icon: Folder, date: NEW, type: "文件夹" },
  { name: "include", icon: Folder, date: NEW, type: "文件夹" },
  { name: "jre", icon: Folder, date: NEW, type: "文件夹" },
  { name: "lib", icon: Folder, date: NEW, type: "文件夹" },
  { name: "COPYRIGHT", icon: Doc, date: OLD, type: "文件" },
  { name: "javafx-src.zip", icon: Zip, date: NEW, type: "ZIP" },
  { name: "LICENSE", icon: Doc, date: NEW, type: "文件" },
  { name: "README.html", icon: Edge, date: NEW, type: "Microsoft" },
  { name: "release", icon: Doc, date: NEW, type: "文件" },
  { name: "src.zip", icon: Zip, date: OLD, type: "ZIP" },
  { name: "THIRDPARTYLICENSEREADME.txt", icon: TxtDoc, date: NEW, type: "文本文档" },
  { name: "THIRDPARTYLICENSEREADME-JAVAF...", icon: TxtDoc, date: NEW, type: "文本文档" },
];

function FileExplorer() {
  return (
    <Explorer>
      <ExplorerRibbon />
      <AddressBar />
      <Panes>
        <Tree>
          {tree.map(({ text, level, icon: Icon, pin, gap, selected }, i) => (
            <TreeRow key={i} $level={level} $gap={gap} $selected={selected}>
              {Icon ? <Icon /> : <svg width="16" height="16" />}
              <TreeText>{text}</TreeText>
              {pin && <PinSlot><Pin /></PinSlot>}
            </TreeRow>
          ))}
        </Tree>
        <Files>
          <FileHead>
            <div>
              名称
              <Chevron d={UP} stroke="#777" sw={1} />
            </div>
            <div>修改日期</div>
            <div>类型</div>
          </FileHead>
          <FileList>
            {files.map(({ name, icon: Icon, date, type }) => (
              <FileRow key={name}>
                <Icon />
                <FileName>{name}</FileName>
                <span>{date}</span>
                <span>{type}</span>
              </FileRow>
            ))}
          </FileList>
        </Files>
      </Panes>
    </Explorer>
  );
}

/* ---------- red pen marks over everything ---------- */

const Marker = styled.div`
  position: absolute;
  left: ${(p) => p.$x}px;
  top: ${(p) => p.$y}px;
  width: ${(p) => p.$w}px;
  height: ${(p) => p.$h}px;
  border: 3px solid #ff2013;
  border-radius: 3px;
`;

const Ink = styled.svg`
  position: absolute;
  left: 0;
  top: 0;
  fill: none;
  stroke: #ff2013;
  stroke-width: 10;
  stroke-linecap: round;
  stroke-linejoin: round;
`;

const Watermark = styled.div`
  position: absolute;
  right: 14px;
  bottom: 5px;
  color: #929292;
  font-size: 14px;
  line-height: 20px;
  letter-spacing: 0.45px;
`;

function Handwriting() {
  return (
    <Ink width="1650" height="665" viewBox="0 0 4950 1995">
      <path d="M750 1494L720 1487 696 1480 690 1543 730 1557 744 1568 744 1580 728 1601 692 1596M784 1508L791 1535 797 1613" />
      <path d="M2082 1657L2045 1637 2023 1635 2016 1663 2035 1670 2070 1715 2071 1737 2053 1737 2016 1729M2101 1672L2155 1648 2168 1665 2168 1697 2153 1723 2135 1735 2115 1740 2180 1751 2176 1761" />
      <path d="M2202 462L2153 460 2143 497 2177 504 2197 528 2187 548 2148 545M2233 470L2262 455 2280 456 2278 480 2268 494 2248 504 2286 502 2286 540 2264 548 2243 545" />
      <path d="M3922 412L3890 403 3875 405 3875 440 3910 448 3922 468 3910 475 3885 477M3948 408L3948 445 3953 456 4025 458M3983 385L3985 440 3986 492" />
    </Ink>
  );
}

export default function App() {
  return (
    <Desktop>
      <GlobalStyle />
      <Settings>
        <SettingsNav />
        <SettingsBody>
          <SettingsTitle>相关</SettingsTitle>
          <SettingsLinks>
            <span>更改产品密钥或升级 Windows</span>
            <span>阅读适用于我们服务的 Microsoft 服务协议</span>
          </SettingsLinks>
        </SettingsBody>
      </Settings>
      <SystemProperties />
      <Backdrop />
      <FileExplorer />
      <EnvironmentVariables />
      <NewVariable />
      <Marker $x={295} $y={491} $w={141} $h={49} />
      <Marker $x={745} $y={536} $w={106} $h={53} />
      <Marker $x={445} $y={129} $w={674} $h={200} />
      <Marker $x={1164} $y={88} $w={305} $h={101} />
      <Handwriting />
      <Watermark>CSDN @JavacKaka</Watermark>
    </Desktop>
  );
}
